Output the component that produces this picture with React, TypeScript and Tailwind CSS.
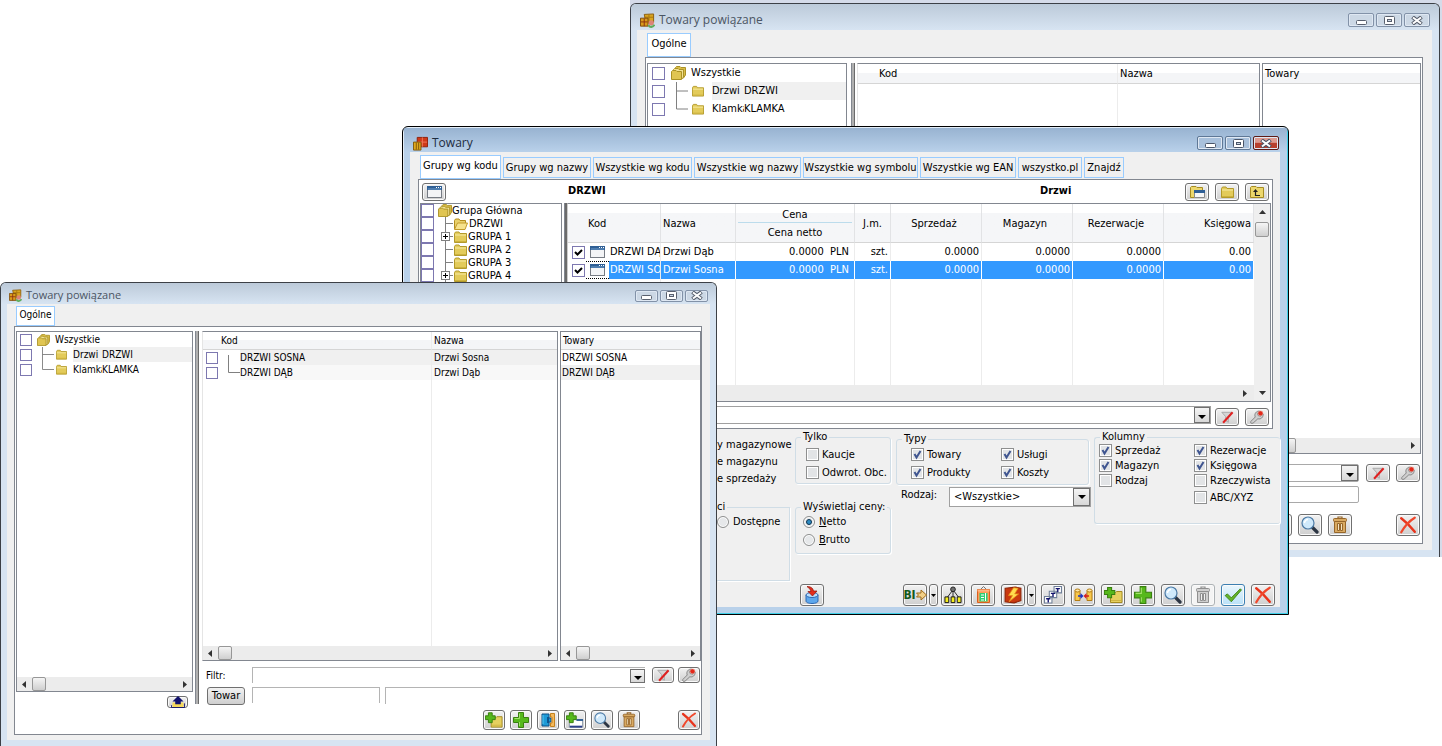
import { useState } from 'react';
import type { ReactNode } from 'react';
import clsx from 'clsx';

// ---------- icons ----------

function FolderIcon({ className = 'w-[13px] h-3' }: { className?: string }) {
  return (
    <svg viewBox="0 0 13 12" className={clsx('shrink-0', className)} aria-hidden="true">
      <path d="M.5 2.5 1.5 1H5l1 1.5h6.5v9H.5z" fill="#e3cb5a" stroke="#b39a2a" />
      <path d="M1 4h11" stroke="#f7eba6" />
      <path d="M1 10.5h11" stroke="#cdb23d" />
    </svg>
  );
}

function OpenFolderIcon() {
  return (
    <svg viewBox="0 0 14 12" className="h-3 w-[14px] shrink-0" aria-hidden="true">
      <path d="M.5 11V2.5L1.5 1H5l1 1.5h5.5V5" fill="#e9d06a" stroke="#b38d1e" />
      <path d="M.5 11.5 3.5 5h10l-2.5 6.5z" fill="#f6e28c" stroke="#c29a2c" />
    </svg>
  );
}

function FoldersIcon({ className }: { className: string }) {
  return (
    <svg viewBox="0 0 15 14" className={clsx('shrink-0', className)} aria-hidden="true">
      <path d="M4.500 3V1.500L5.500.500H9l1 1h4.500v7.500l-2 3H5z" fill="#d9bd48" stroke="#ab9226" />
      <path d="M2.500 5V3.500l1-1H7l1 1h4.500v7.500l-1 1.500H3z" fill="#f2e294" stroke="#ab9226" />
      <path d="M.5 13.500v-8l1-1H5l1 1h4.500v8z" fill="#e0c552" stroke="#ab9226" />
    </svg>
  );
}

function WindowIcon({ className = 'w-[15px] h-3' }: { className?: string }) {
  return (
    <svg viewBox="0 0 15 12" className={clsx('shrink-0', className)} aria-hidden="true">
      <rect x=".5" y=".5" width="14" height="11" fill="#f3f4f6" stroke="#777c84" />
      <path d="M0 0h15v4H0z" fill="#2f5f95" />
      <path d="M1 3h13" stroke="#6f9cc9" />
      <path d="M9 1.500h1m1 0h1m1 0h1" stroke="#fff" />
    </svg>
  );
}

const PLUS = 'M5.500 1.500h5v4h4v5h-4v4h-5v-4h-4v-5h4z';

function PlusIcon() {
  return (
    <svg viewBox="0 0 16 16" className="size-full" aria-hidden="true">
      <path d="M5.500.5h5v5h5v5h-5v5h-5v-5h-5v-5h5z" fill="#56b81c" stroke="#39800f" />
      <path d="M6.500 1.500v5h-5M6.500 10v4" fill="none" stroke="#a3e36a" />
    </svg>
  );
}

function PlusFolderIcon() {
  return (
    <svg viewBox="0 0 19 16" className="h-full w-[19px]" aria-hidden="true">
      <path d="M6.500 5.500h5l1-1h5.500v11H6.500z" fill="#e6d05f" stroke="#a68c22" />
      <path d="M7 13.500h10" stroke="#cfb443" />
      <path d={PLUS} transform="scale(.8) translate(-1 -1)" fill="#56b81c" stroke="#39800f" strokeWidth="1.300" />
    </svg>
  );
}

function PlusListIcon() {
  return (
    <svg viewBox="0 0 19 16" className="h-full w-[19px]" aria-hidden="true">
      <path d="M3.500 7.500h14v8h-14z" fill="#fff" stroke="#8b97a6" />
      <path d="M11 7h7v2h-7z" fill="#2f5f95" />
      <path d="M4 15h13" stroke="#2b3f8b" strokeWidth="2" />
      <path d={PLUS} transform="scale(.8) translate(-1 -1)" fill="#56b81c" stroke="#39800f" strokeWidth="1.300" />
    </svg>
  );
}

function PuzzleIcon() {
  return (
    <svg viewBox="0 0 16 16" className="size-full" aria-hidden="true">
      <path d="M2 2h7v4h2v4H9v4H2z" fill="#1e9bd7" stroke="#0c4e85" />
      <path d="M10.500 1.500h4v13h-4V11H12V5h-1.500z" fill="#f5b95b" stroke="#c4821f" />
      <path d="M7 5h2v6H7z" fill="#0b5590" />
      <path d="M3 3v9" stroke="#5cc6ee" />
    </svg>
  );
}

function SearchIcon() {
  return (
    <svg viewBox="0 0 18 18" className="size-full" aria-hidden="true">
      <path d="m11.500 11.500 4.500 4.500" stroke="#2d3644" strokeWidth="3.200" strokeLinecap="round" />
      <circle cx="7" cy="7" r="6" fill="#cfe9fb" stroke="#4c7aa5" strokeWidth="1.200" />
      <path d="M3.500 7A3.500 3.500 0 0 1 7 3.500" fill="none" stroke="#fff" strokeWidth="1.500" />
    </svg>
  );
}

function TrashIcon({ gray }: { gray?: boolean }) {
  const dark = gray ? '#8f8f8f' : '#96662a';
  const fill = gray ? '#cfcfcf' : '#d9aa62';
  return (
    <svg viewBox="0 0 16 18" className="size-full" aria-hidden="true">
      <path d="M6 2.500V1h4v1.500" fill="none" stroke={dark} strokeWidth="1.200" />
      <rect x="1.500" y="2.500" width="13" height="3" rx="1" fill={fill} stroke={dark} />
      <path d="M2.500 5.500h11v11h-11z" fill={fill} stroke={dark} />
      <path d="M5.500 7.500h2v7h-2zM8.500 7.500h2v7h-2z" fill={gray ? '#f0f0f0' : '#f4e3c0'} stroke={dark} />
    </svg>
  );
}

function CrossIcon() {
  return (
    <svg viewBox="0 0 16 16" className="size-full" aria-hidden="true">
      <path d="M2 2c4 3 8 7 12 12" stroke="#e8341c" strokeWidth="2.200" fill="none" strokeLinecap="round" />
      <path d="M14 1.500C9 4.500 5 9 2 14.500" stroke="#f0482c" strokeWidth="2" fill="none" strokeLinecap="round" />
    </svg>
  );
}

function CheckIcon() {
  return (
    <svg viewBox="0 0 16 16" className="size-full" aria-hidden="true">
      <path d="m1 8.500 2-1.500 3.500 3.500L14.500 2.500l1 1L6.500 14z" fill="#63b52b" stroke="#3c8013" strokeWidth=".8" />
    </svg>
  );
}

function FilterOffIcon() {
  return (
    <svg viewBox="0 0 18 15" className="h-[13px] w-4" aria-hidden="true">
      <path d="M3 1.500h11l-3.500 5V13L7.500 11V6.500z" fill="#d5d5d5" stroke="#a4a4a4" />
      <path d="M15.500 1.500 4.500 13.500" stroke="#df2020" strokeWidth="2.400" />
    </svg>
  );
}

function WrenchIcon() {
  return (
    <svg viewBox="0 0 18 16" className="h-[14px] w-4" aria-hidden="true">
      <path
        d="m2 13 5-5C5.500 4.500 8 1 12 1.200L9.500 4l1 2.500 3 .5 2.500-2.500c.5 4-3 6.500-6 5.500l-5.500 5C2.500 16 1 14.500 2 13z"
        fill="#cfcfcf"
        stroke="#7b7b7b"
      />
      <circle cx="13" cy="3.800" r="2.800" fill="#e2281a" stroke="#f09a8c" strokeWidth=".6" />
    </svg>
  );
}

function UpFolderIcon() {
  return (
    <svg viewBox="0 0 16 13" className="h-3 w-4" aria-hidden="true">
      <path d="M2 7h12v5H2z" fill="#f6d95b" />
      <path d="M1 10v2.500h14V8" fill="none" stroke="#12126d" />
      <path d="M8 0 14 6h-3v3H5V6H2z" fill="#12126d" />
    </svg>
  );
}

function FolderWindowIcon() {
  return (
    <svg viewBox="0 0 16 14" className="h-[14px] w-4" aria-hidden="true">
      <path d="M1.500 12.500v-10l1-1H7l1 1h5.500v10z" fill="#ecd76c" stroke="#a68c22" />
      <path d="M5.500 6.500h10v6h-10z" fill="#f7f7f7" stroke="#8a8a8a" />
      <path d="M5 5h11v3H5z" fill="#2f5f95" />
    </svg>
  );
}

function FolderUpIcon() {
  return (
    <svg viewBox="0 0 16 14" className="h-[14px] w-4" aria-hidden="true">
      <path d="M1.500 12.500v-10l1-1H7l1 1h6.500v10z" fill="#ecd76c" stroke="#a68c22" />
      <path d="M6.500 6v4.500H11" fill="none" stroke="#222" strokeWidth="1.200" />
      <path d="m6.500 4 2.500 3H4z" fill="#222" />
    </svg>
  );
}

function ImportIcon() {
  return (
    <svg viewBox="0 0 16 18" className="size-full" aria-hidden="true">
      <path d="M2 9v6c0 1.500 2.500 2.500 6 2.500s6-1 6-2.500V9" fill="#5da7ec" stroke="#2c68b4" />
      <ellipse cx="8" cy="9" rx="6" ry="2.500" fill="#b9dcfa" stroke="#2c68b4" />
      <path d="M3 .5c4 0 6 1.500 6.500 4.500H13l-4.500 5L4 5.500h3C6.500 3.500 5 2 3 .5z" fill="#e32c1c" stroke="#8e1109" strokeWidth=".7" />
    </svg>
  );
}

function ArrowRightIcon() {
  return (
    <svg viewBox="0 0 11 12" className="h-3 w-[11px] shrink-0" aria-hidden="true">
      <path d="M.5 4H5V1l5.500 5L5 11V8H.5L2.500 6z" fill="#f2cf86" stroke="#a06c1b" />
    </svg>
  );
}

function TreeIcon() {
  return (
    <svg viewBox="0 0 20 19" className="h-full w-5" aria-hidden="true">
      <path d="M10 4 4 12M10 4v8M10 4l6 8" stroke="#222" />
      <circle cx="10" cy="3.500" r="2.500" fill="#707070" stroke="#222" />
      <path d="M1.500 11.500h4v6h-4zM8 11.500h4v6H8zM14.500 11.500h4v6h-4z" fill="#f4ee1e" stroke="#111" />
    </svg>
  );
}

function ClipboardIcon() {
  return (
    <svg viewBox="0 0 15 18" className="h-full w-[15px]" aria-hidden="true">
      <path d="M5 3 7.500.5 10 3" fill="none" stroke="#777" />
      <path d="M1.500 3.500h12v13h-12z" fill="#ff9a58" stroke="#d9601e" />
      <path d="M1.500 3.500h12v2h-12z" fill="#ffb482" />
      <path d="M3.500 7h8v8.500h-8z" fill="#2fcf74" />
      <path d="M5 9h3m-3 2.500h3M5 14h3M9.500 7v8" stroke="#fff" />
    </svg>
  );
}

function BoltIcon() {
  return (
    <svg viewBox="0 0 16 16" className="size-full" aria-hidden="true">
      <path d="m1 2 9-1 5 1v11l-6 2-8-1z" fill="#c9390f" stroke="#8f2508" />
      <path d="M8.500 1.500 4 8.500h3.500l-3 5.500L13 7H9.500l3-5z" fill="#ffdc4e" stroke="#e88b1a" strokeWidth=".7" />
    </svg>
  );
}

function StepsIcon() {
  return (
    <svg viewBox="0 0 17 17" className="size-full" aria-hidden="true">
      <g fill="#fff" stroke="#6f7f98">
        <path d="M9.500.500h7v6h-7zM5 5h7v6H5zM.5 10h7v6h-7z" />
      </g>
      <path d="M11 2.500h4M13 2.500V6M6.500 7h4m-2 0v3.500M2 12h4m-2 0v3.500" stroke="#12126d" strokeWidth="1.300" />
    </svg>
  );
}

function LinkIcon() {
  return (
    <svg viewBox="0 0 19 14" className="h-full w-[19px]" aria-hidden="true">
      <path d="M1 2.500h5v10H1zM13 2.500h5v10h-5z" fill="#f8c94c" stroke="#b47d12" />
      <ellipse cx="3.500" cy="2.500" rx="2.500" ry="1.500" fill="#ffe9a8" stroke="#b47d12" />
      <ellipse cx="15.500" cy="2.500" rx="2.500" ry="1.500" fill="#ffe9a8" stroke="#b47d12" />
      <path d="M4 8h4" stroke="#1b35c4" strokeWidth="1.500" />
      <path d="m6.500 5 3 3-3 3z" fill="#1b35c4" />
      <path d="M11 8h4" stroke="#d81e1e" strokeWidth="1.500" />
      <path d="m12.500 5-3 3 3 3z" fill="#d81e1e" />
    </svg>
  );
}

function AppIcon({ className, related }: { className: string; related?: boolean }) {
  return (
    <svg viewBox="0 0 16 16" className={clsx('shrink-0', className)} aria-hidden="true">
      {related ? (
        <>
          <path d="M4.500 1.500 14.500 1v9l-8 1z" fill="#d9a520" stroke="#8a5c0c" />
          <path d="M5 4.500h9M9.500 1.500v8" stroke="#a8780f" />
          <path d="M.500 5.500h8V14h-8z" fill="#d99c1c" stroke="#7d4a0b" />
          <path d="M1 9.500h7M4.500 6v8" stroke="#8c2f10" />
          <circle cx="12" cy="10.500" r="2.800" fill="#dc8478" />
          <path d="M9 13c1.500 2.500 4.500 2.500 6.500-.5" fill="none" stroke="#5dac5b" strokeWidth="2.200" />
        </>
      ) : (
        <>
          <path d="M4.500 1.500h11v10h-11z" fill="#cf3a19" stroke="#8f1e08" />
          <path d="M10 1.500v10M5 6.500h10" stroke="#f0795a" />
          <path d="M.5 6.500h8v8.500h-8z" fill="#dfa91e" stroke="#80560b" />
          <path d="M3.500 7v7.500m2.500-7.500v7.500" stroke="#80560b" />
        </>
      )}
    </svg>
  );
}

function Arrow({ dir }: { dir: 'left' | 'right' | 'up' | 'down' }) {
  const d = { left: 'M5 0v7L1 3.500z', right: 'M2 0v7l4-3.500z', up: 'M0 5h7L3.500 1z', down: 'M0 2h7L3.500 6z' }[dir];
  return (
    <svg viewBox="0 0 7 7" className="size-[7px] shrink-0" aria-hidden="true">
      <path d={d} fill="#333" />
    </svg>
  );
}

// ---------- controls ----------

interface ToolButtonProps {
  label: string;
  className?: string;
  tone?: 'normal' | 'off' | 'hot';
  children: ReactNode;
}

function ToolButton({ label, className, tone = 'normal', children }: ToolButtonProps) {
  return (
    <button
      type="button"
      aria-label={label}
      title={label}
      className={clsx(
        'flex shrink-0 items-center justify-center rounded-[3px] border shadow-[inset_0_0_0_1px_#fafafa]',
        tone === 'normal' && 'border-[#707070] bg-linear-to-b from-[#f2f2f2] to-[#cfcfcf]',
        tone === 'off' && 'border-[#adb2b5] bg-[#f4f4f4]',
        tone === 'hot' && 'border-[#3c7fb1] bg-linear-to-b from-[#eaf6fd] to-[#b9e1f8]',
        className,
      )}
    >
      {children}
    </button>
  );
}

interface BoxProps {
  label: string;
  checked?: boolean;
  className?: string;
}

// Flat tick box used inside lists
function ListCheck({ label, checked, className }: BoxProps) {
  return (
    <span className={clsx('relative block shrink-0', className)}>
      <input
        type="checkbox"
        aria-label={label}
        defaultChecked={checked}
        className="peer block size-full appearance-none border border-[#7d78b0] bg-white"
      />
      <svg viewBox="0 0 13 13" className="pointer-events-none absolute inset-0 hidden size-full peer-checked:block" aria-hidden="true">
        <path d="m3 6 2.500 2.500L10 4" fill="none" stroke="#000" strokeWidth="2" />
      </svg>
    </span>
  );
}

function LabeledCheck({ label, checked }: BoxProps) {
  return (
    <label className="flex items-center gap-[3px] whitespace-nowrap leading-[15px]">
      <span className="relative block size-[13px] shrink-0">
        <input
          type="checkbox"
          defaultChecked={checked}
          className="peer block size-full appearance-none border border-[#8e8f8f] bg-[#e2e4e6] shadow-[inset_0_0_0_1px_#fff]"
        />
        <svg viewBox="0 0 13 13" className="pointer-events-none absolute inset-0 hidden size-full peer-checked:block" aria-hidden="true">
          <path d="m3.500 6 2 3.500L9.500 3" fill="none" stroke="#3f5590" strokeWidth="2" />
        </svg>
      </span>
      {label}
    </label>
  );
}

function LabeledRadio({ name, checked, children }: { name: string; checked?: boolean; children: ReactNode }) {
  return (
    <label className="flex items-center gap-1 whitespace-nowrap leading-[18px]">
      <span className="relative block size-3 shrink-0">
        <input
          type="radio"
          name={name}
          defaultChecked={checked}
          className="peer block size-full appearance-none rounded-full border border-[#8e8f8f] bg-[#e6e8ea] shadow-[inset_0_0_0_1px_#fff]"
        />
        <span className="pointer-events-none absolute inset-[3px] hidden rounded-full border border-[#0d3350] bg-[#2e8cc4] peer-checked:block" />
      </span>
      <span>{children}</span>
    </label>
  );
}

function HScroll({ className, thumb = 'ml-2' }: { className?: string; thumb?: string }) {
  return (
    <div className={clsx('flex shrink-0 items-center bg-[#ececec] px-1', className)}>
      <Arrow dir="left" />
      <span
        className={clsx('h-full w-[14px] rounded-[2px] border border-[#979797] bg-linear-to-b from-[#f5f5f5] to-[#cfcfcf]', thumb)}
      />
      <span className="flex-1" />
      <Arrow dir="right" />
    </div>
  );
}

function DropButton({ label, className }: { label: string; className?: string }) {
  return (
    <button
      type="button"
      aria-label={label}
      className={clsx('flex shrink-0 items-center justify-center border border-[#707070] bg-linear-to-b from-[#f4f4f4] to-[#d8d8d8]', className)}
    >
      <svg viewBox="0 0 8 4" className="mt-1 h-1 w-2" aria-hidden="true">
        <path d="M0 0h8L4 4z" fill="#000" />
      </svg>
    </button>
  );
}

// ---------- window chrome ----------

function CaptionButtons({ active, className }: { active?: boolean; className: string }) {
  const base = 'flex items-center justify-center rounded-[2px] border shadow-[inset_0_0_0_1px_#dfe8f3]';
  const plain = active ? 'border-[#5f7896] bg-[#a9c1dc]' : 'border-[#8292a8] bg-[#ccd8e5]';
  const mark = active ? '#4a5568' : '#59606e';
  return (
    <div className="ml-auto flex gap-[2px]">
      <button type="button" aria-label="Minimalizuj" className={clsx(base, plain, className)}>
        <svg viewBox="0 0 11 5" className="mt-1 h-[5px] w-[11px]" aria-hidden="true">
          <rect x=".5" y=".5" width="10" height="4" rx="1" fill="#fff" stroke={mark} />
        </svg>
      </button>
      <button type="button" aria-label="Maksymalizuj" className={clsx(base, plain, className)}>
        <svg viewBox="0 0 11 9" className="h-[9px] w-[11px]" aria-hidden="true">
          <rect x=".5" y=".5" width="10" height="8" rx="1" fill="#fff" stroke={mark} />
          <rect x="3.500" y="3.500" width="4" height="2" fill="#ccd8e5" stroke={mark} />
        </svg>
      </button>
      <button
        type="button"
        aria-label="Zamknij"
        className={clsx(base, active ? 'border-[#5e1b16] bg-linear-to-b from-[#dd9a90] from-45% to-[#b8402e] to-50%' : plain, className)}
      >
        <svg viewBox="0 0 12 9" className="h-[9px] w-3" aria-hidden="true">
          <path d="M1.500 1 10.500 8M10.500 1 1.500 8" stroke={mark} strokeWidth="4" />
          <path d="M2 1.500 10 7.500M10 1.500 2 7.500" stroke="#fff" strokeWidth="2" />
        </svg>
      </button>
    </div>
  );
}

// ---------- related goods window ----------

const LARGE = {
  frame: 'left-[630px] top-[3px] w-[810px] h-[554px] text-[11px]',
  title: 'h-[26px] pl-[9px] pr-[9px] pt-[6px]',
  icon: 'size-[15px]',
  titleText: 'text-[12px]',
  caption: 'h-[14px] w-[26px]',
  body: 'ml-[6px] mr-[7px] mb-[7px] pt-[3px] pl-2 pr-[9px] pb-[6px]',
  tab: 'h-6 w-11 pb-[2px]',
  panel: 'pt-[5px] pr-px',
  tree: 'w-[200px] mr-1',
  treeBox: 'mb-[89px] pl-1',
  rootIcon: 'ml-[6px] h-[14px] w-[15px]',
  rootText: 'ml-[5px] pt-px',
  branch: 'ml-[11px]',
  leafIcon: 'ml-1 w-3 h-3',
  leafText: 'ml-[8px] pt-px',
  leafName: 'w-8',
  splitter: 'mr-[2px]',
  tables: 'h-[391px]',
  head: 'h-5',
  headCell: 'pt-[2px]',
  row: 'h-[18px]',
  codeCol: 'w-[260px] pl-[21px]',
  side: 'w-[159px]',
  check: 'size-[13px]',
  scroll: 'h-[15px]',
  thumb: 'ml-2',
  line: 'mt-[10px] h-[18px]',
  drop: 'w-[17px] h-4',
  field: 'border-[#a9a9a9] rounded-[2px] border',
  fields: 'pr-[62px]',
  tool: 'w-6 h-[18px]',
  toolGap: 'ml-[6px]',
  action: 'w-6 h-[22px] p-px',
  actions: 'mt-[10px] gap-[6px]',
  lastGap: 'ml-[38px]',
};

type Sizes = typeof LARGE;

const SMALL: Sizes = {
  frame: 'left-0 top-[282px] w-[717px] h-[464px] text-[10px]',
  title: 'h-[21px] pl-2 pr-2 pt-1',
  icon: 'size-[13px]',
  titleText: 'text-[11px]',
  caption: 'h-3 w-[23px]',
  body: 'mx-[6px] mb-[6px] pt-[2px] pl-[7px] pr-2 pb-[5px]',
  tab: 'h-5 w-[39px] pb-[3px]',
  panel: 'pt-1',
  tree: 'w-[177px] mr-[2px]',
  treeBox: 'pl-[3px]',
  rootIcon: 'ml-[5px] h-3 w-[13px]',
  rootText: 'ml-[5px]',
  branch: 'ml-[10px]',
  leafIcon: 'ml-[2px] w-[11px] h-[11px]',
  leafText: 'ml-[6px]',
  leafName: 'w-[29px]',
  splitter: 'mr-[3px] mb-[30px]',
  tables: 'h-[330px]',
  head: 'h-[18px]',
  headCell: '',
  row: 'h-[15px]',
  codeCol: 'w-[229px] pl-[18px]',
  side: 'w-[141px]',
  check: 'size-3',
  scroll: 'h-[14px]',
  thumb: 'ml-1',
  line: 'mt-[6px] h-4',
  drop: 'w-[15px] h-[14px]',
  field: 'border-[#b4b4b4] border-t border-l',
  fields: 'pr-[56px]',
  tool: 'w-[22px] h-4',
  toolGap: 'ml-1',
  action: 'w-[22px] h-5 p-px',
  actions: 'mt-[5px] gap-[5px]',
  lastGap: 'ml-[33px]',
};

const GROUPS = [
  { name: 'Drzwi', code: 'DRZWI' },
  { name: 'Klamka', code: 'KLAMKA' },
];

interface Item {
  code: string;
  name: string;
}

const HEAD = 'border-b border-[#d5d5d5] bg-linear-to-b from-white from-45% to-[#f4f5f7] to-50% text-left font-normal';

function RelatedWindow({ id, sizes: s, items }: { id: string; sizes: Sizes; items: Item[] }) {
  return (
    <section
      className={clsx(
        'absolute flex flex-col overflow-hidden rounded-t-[6px] border border-b-0 border-[#3c4046] bg-[#d7e4f2] text-black',
        s.frame,
      )}
    >
      <header className={clsx('flex shrink-0 items-center bg-linear-to-b from-[#bccad9] to-[#d7e4f2]', s.title)}>
        <AppIcon related className={s.icon} />
        <h2 className={clsx("ml-1 font-['Open_Sans',sans-serif] text-[#4b5563]", s.titleText)}>Towary powiązane</h2>
        <CaptionButtons className={s.caption} />
      </header>

      <div className={clsx('flex min-h-0 flex-1 flex-col bg-[#f0f0f0]', s.body)}>
        <div className="flex shrink-0 pl-[2px]">
          <button type="button" className={clsx('flex items-center justify-center border border-[#99ccff] bg-white', s.tab)}>
            Ogólne
          </button>
        </div>

        <div className={clsx('flex min-h-0 flex-1 border border-[#828790] bg-white pl-px', s.panel)}>
          <div className={clsx('flex shrink-0 flex-col', s.tree)}>
            <div className={clsx('flex min-h-0 flex-1 flex-col border border-[#828790]', s.treeBox)}>
              <div className={clsx('flex items-center', s.row)}>
                <ListCheck label="Wszystkie" className={s.check} />
                <FoldersIcon className={s.rootIcon} />
                <span className={s.rootText}>Wszystkie</span>
              </div>
              {GROUPS.map((g, i) => (
                <div key={g.code} className={clsx('flex items-stretch', s.row)}>
                  <ListCheck label={g.code} className={clsx('self-center', s.check)} />
                  <svg
                    viewBox="0 0 12 18"
                    preserveAspectRatio="none"
                    className={clsx('h-full w-3 shrink-0', s.branch)}
                    aria-hidden="true"
                  >
                    <path d={i === GROUPS.length - 1 ? 'M.5 0v9H12' : 'M.5 0v18M0 9h12'} fill="none" stroke="#808080" />
                  </svg>
                  <FolderIcon className={clsx('self-center', s.leafIcon)} />
                  <div className={clsx('flex flex-1 items-center', i === 0 && 'bg-[#f0f0f0]', s.leafText)}>
                    <span className={clsx('shrink-0 overflow-hidden whitespace-nowrap', s.leafName)}>{g.name}</span>
                    <span>{g.code}</span>
                  </div>
                </div>
              ))}
              <span className="flex-1" />
              <HScroll className={clsx('-ml-[3px]', s.scroll)} thumb={s.thumb} />
            </div>
            {items.length > 0 && (
              <div className="flex h-[42px] shrink-0 justify-end pr-[5px] pt-1">
                <ToolButton label="Do góry" className="h-3 w-[21px]">
                  <UpFolderIcon />
                </ToolButton>
              </div>
            )}
          </div>

          <div className={clsx('w-1 shrink-0 border-x border-[#828790] border-r-[#6b6b6b] bg-[#b0b0b0]', s.splitter)} />

          <div className="flex min-w-0 flex-1 flex-col">
            <div className={clsx('flex shrink-0 gap-[2px]', s.tables)}>
              <div className="flex min-w-0 flex-1 flex-col border border-[#828790] border-l-[#e5e5e5]">
                <div className="min-h-0 flex-1">
                  <table className="h-full w-full table-fixed border-separate border-spacing-0">
                    <thead>
                      <tr className={s.head}>
                        <th className={clsx(HEAD, 'border-r border-r-[#ececec]', s.codeCol, s.headCell)}>Kod</th>
                        <th className={clsx(HEAD, 'pl-[2px]', s.headCell)}>Nazwa</th>
                      </tr>
                    </thead>
                    <tbody>
                      {items.map((item, i) => (
                        <tr key={item.code} className={s.row}>
                          <td className="border-r border-[#ececec] p-0">
                            <div className={clsx('flex items-stretch', s.row)}>
                              <ListCheck label={item.code} className="ml-[3px] size-3 self-center" />
                              <svg viewBox="0 0 12 15" className="ml-[10px] h-full w-3" aria-hidden="true">
                                <path d={i === items.length - 1 ? 'M.5 0v7.500H12' : 'M.5 5v10'} fill="none" stroke="#808080" />
                              </svg>
                              <span className={clsx('flex flex-1 items-center', i === 0 ? 'bg-[#f0f0f0]' : 'bg-[#f8f8f8]')}>
                                {item.code}
                              </span>
                            </div>
                          </td>
                          <td className={clsx('py-0 pl-[2px]', i === 0 ? 'bg-[#f0f0f0]' : 'bg-[#f8f8f8]')}>{item.name}</td>
                        </tr>
                      ))}
                      <tr>
                        <td className="border-r border-[#ececec]" />
                        <td />
                      </tr>
                    </tbody>
                  </table>
                </div>
                <HScroll className={s.scroll} thumb={s.thumb} />
              </div>
              <div className={clsx('flex shrink-0 flex-col border border-[#828790]', s.side)}>
                <table className="w-full border-separate border-spacing-0">
                  <thead>
                    <tr className={s.head}>
                      <th className={clsx(HEAD, 'pl-[2px]', s.headCell)}>Towary</th>
                    </tr>
                  </thead>
                  <tbody>
                    {items.map((item, i) => (
                      <tr key={item.code} className={s.row}>
                        <td className={clsx('py-0 pl-px', i === 1 && 'bg-[#f0f0f0]')}>{item.code}</td>
                      </tr>
                    ))}
                  </tbody>
                </table>
                <span className="flex-1" />
                <HScroll className={s.scroll} thumb={s.thumb} />
              </div>
            </div>

            <div className={clsx('flex shrink-0 items-center pl-1 pr-px', s.line)}>
              <label htmlFor={`${id}-filter`} className="w-[46px] shrink-0">
                Filtr:
              </label>
              <div className={clsx('flex h-full min-w-0 flex-1 items-center', s.field)}>
                <input id={`${id}-filter`} type="text" className="h-full min-w-0 flex-1 px-1 outline-none" />
                <DropButton label="Historia filtrów" className={s.drop} />
              </div>
              <ToolButton label="Wyczyść filtr" className={clsx('ml-[7px]', s.tool)}>
                <FilterOffIcon />
              </ToolButton>
              <ToolButton label="Konstruktor filtra" className={clsx(s.toolGap, s.tool)}>
                <WrenchIcon />
              </ToolButton>
            </div>

            <div className={clsx('mt-1 flex shrink-0 items-start pl-[5px]', s.fields)}>
              <button
                type="button"
                className="mr-[7px] h-[18px] w-[38px] rounded-[3px] border border-[#707070] bg-linear-to-b from-[#f2f2f2] to-[#cfcfcf] text-[11px] leading-4"
              >
                Towar
              </button>
              <input type="text" aria-label="Kod towaru" className={clsx('mr-[5px] h-4 w-[128px] border-r', s.field)} />
              <input type="text" aria-label="Nazwa towaru" className={clsx('h-[17px] min-w-0 flex-1', s.field)} />
            </div>

            <div className={clsx('flex shrink-0 justify-end pr-px', s.actions)}>
              <ToolButton label="Dodaj grupę" className={s.action}>
                <PlusFolderIcon />
              </ToolButton>
              <ToolButton label="Dodaj" className={s.action}>
                <PlusIcon />
              </ToolButton>
              <ToolButton label="Powiąż" className={s.action}>
                <PuzzleIcon />
              </ToolButton>
              <ToolButton label="Dodaj z listy" className={s.action}>
                <PlusListIcon />
              </ToolButton>
              <ToolButton label="Podgląd" className={s.action}>
                <SearchIcon />
              </ToolButton>
              <ToolButton label="Usuń" className={s.action}>
                <TrashIcon />
              </ToolButton>
              <ToolButton label="Zamknij" className={clsx(s.lastGap, s.action)}>
                <CrossIcon />
              </ToolButton>
            </div>
          </div>
        </div>
      </div>
    </section>
  );
}

// ---------- goods window ----------

const TABS = [
  { label: 'Grupy wg kodu', width: 'w-[81px]' },
  { label: 'Grupy wg nazwy', width: 'w-[88px]' },
  { label: 'Wszystkie wg kodu', width: 'w-[99px]' },
  { label: 'Wszystkie wg nazwy', width: 'w-[107px]' },
  { label: 'Wszystkie wg symbolu', width: 'w-[115px]' },
  { label: 'Wszystkie wg EAN', width: 'w-[96px]' },
  { label: 'wszystko.pl', width: 'w-16' },
  { label: 'Znajdź', width: 'w-10' },
];

const TREE = [
  { label: 'DRZWI', open: true, expandable: false },
  { label: 'GRUPA 1', open: false, expandable: true },
  { label: 'GRUPA 2', open: false, expandable: false },
  { label: 'GRUPA 3', open: false, expandable: false },
  { label: 'GRUPA 4', open: false, expandable: true },
];

const GOODS = [
  { code: 'DRZWI DĄB', name: 'Drzwi Dąb' },
  { code: 'DRZWI SOSNA', name: 'Drzwi Sosna' },
];

const TH =
  'border-r border-b border-[#e2e3e5] border-b-[#d5d5d5] bg-linear-to-b from-white from-25% to-[#f5f6f8] to-25% font-normal px-0 pb-0 pt-[3px]';

function GoodsTable() {
  const [selected, setSelected] = useState('DRZWI SOSNA');

  return (
    <table className="h-full w-full table-fixed border-separate border-spacing-0">
      <colgroup>
        <col className="w-[93px]" />
        <col className="w-[75px]" />
        <col className="w-[119px]" />
        <col className="w-9" />
        <col className="w-[91px]" />
        <col className="w-[91px]" />
        <col className="w-[91px]" />
        <col />
      </colgroup>
      <thead>
        <tr className="h-[38px]">
          <th className={TH}>
            <span className="block pl-5 text-left">Kod</span>
          </th>
          <th className={TH}>
            <span className="block pl-[2px] text-left">Nazwa</span>
          </th>
          <th className={TH}>
            <div className="mx-[2px] border-b border-[#bcdcec] leading-[15px]">Cena</div>
            <div className="leading-[19px]">Cena netto</div>
          </th>
          <th className={TH}>J.m.</th>
          <th className={clsx(TH, 'pr-1')}>Sprzedaż</th>
          <th className={clsx(TH, 'pr-1')}>Magazyn</th>
          <th className={clsx(TH, 'pr-1')}>Rezerwacje</th>
          <th className={TH}>
            <span className="block pr-[2px] text-right">Księgowa</span>
          </th>
        </tr>
      </thead>
      <tbody>
        {GOODS.map(g => {
          const on = g.code === selected;
          const td = clsx(
            'overflow-hidden whitespace-nowrap border-r pb-0 pl-0 pr-[2px] pt-px',
            on ? 'border-r-white bg-[#3399ff] text-white' : 'border-r-[#ececec]',
          );
          return (
            <tr key={g.code} className="h-[18px]" onClick={() => setSelected(g.code)}>
              <td className={clsx('overflow-hidden border-r border-[#ececec] p-0', on && 'text-white')}>
                <div className="flex h-[18px] items-stretch whitespace-nowrap">
                  <ListCheck label={g.code} checked className="ml-1 size-[13px] self-center" />
                  <span
                    className={clsx('ml-px flex shrink-0 items-center border-y border-dotted px-1', on ? 'border-black' : 'border-transparent')}
                  >
                    <WindowIcon className="h-3 w-[15px]" />
                  </span>
                  <span className={clsx('flex min-w-0 flex-1 items-center overflow-hidden pl-px pt-px', on && 'bg-[#3399ff]')}>
                    {g.code}
                  </span>
                </div>
              </td>
              <td className={clsx(td, 'text-left')}>
                <span className="pl-[2px]">{g.name}</span>
              </td>
              <td className={clsx(td, 'whitespace-pre text-right')}>{'0.0000  PLN '}</td>
              <td className={clsx(td, 'text-right')}>szt.</td>
              <td className={clsx(td, 'text-right')}>0.0000</td>
              <td className={clsx(td, 'text-right')}>0.0000</td>
              <td className={clsx(td, 'text-right')}>0.0000</td>
              <td className={clsx(td, 'text-right')}>0.00</td>
            </tr>
          );
        })}
        <tr>
          {[0, 1, 2, 3, 4, 5, 6].map(i => (
            <td key={i} className="border-r border-[#ececec]" />
          ))}
          <td />
        </tr>
      </tbody>
    </table>
  );
}

function Group({ title, className, body, children }: { title: string; className?: string; body: string; children: ReactNode }) {
  return (
    <fieldset className={clsx('min-w-0 rounded-[3px] border border-[#d0dde6] shadow-[1px_1px_0_#fff]', className)}>
      <legend className="ml-[5px] whitespace-nowrap px-[2px] leading-3">{title}</legend>
      <div className={body}>{children}</div>
    </fieldset>
  );
}

const ACTION = 'w-6 h-[22px] p-px';

function SplitArrow({ label }: { label: string }) {
  return (
    <ToolButton label={label} className="ml-[2px] mr-[3px] h-[22px] w-[9px]">
      <svg viewBox="0 0 5 3" className="h-[3px] w-[5px]" aria-hidden="true">
        <path d="M0 0h5L2.500 3z" fill="#000" />
      </svg>
    </ToolButton>
  );
}

function GoodsWindow() {
  const [tab, setTab] = useState(0);

  return (
    <section className="absolute left-[402px] top-[126px] flex h-[489px] w-[887px] flex-col overflow-hidden rounded-t-[6px] border border-black bg-[#b9d1ea] text-[11px] text-black shadow-[inset_-1px_-1px_0_#3fd0e8,inset_1px_1px_0_#e4eef8]">
      <header className="mx-px mt-px flex h-6 shrink-0 items-center bg-linear-to-b from-[#98b3d1] to-[#b9d1ea] pl-[9px] pr-2 pt-[6px]">
        <AppIcon className="size-[15px]" />
        <h1 className="ml-1 font-['Open_Sans',sans-serif] text-[12px] text-[#1d2b3e]">Towary</h1>
        <CaptionButtons active className="h-[14px] w-[26px]" />
      </header>

      <div className="mb-[7px] ml-[7px] mr-2 flex min-h-0 flex-1 flex-col bg-[#f0f0f0]">
        <nav className="flex h-[27px] shrink-0 items-end gap-[2px] pl-[10px]">
          {TABS.map((t, i) => (
            <button
              key={t.label}
              type="button"
              onClick={() => setTab(i)}
              className={clsx(
                'shrink-0 whitespace-nowrap border border-[#99ccff] text-center',
                t.width,
                i === tab ? 'h-6 bg-white pb-[2px]' : 'mb-px h-[21px] bg-[#f0f0f0] pt-px',
              )}
            >
              {t.label}
            </button>
          ))}
        </nav>

        <div className="ml-2 mr-[7px] flex h-[250px] shrink-0 flex-col border border-[#828790] bg-white px-px">
          <div className="flex h-[23px] shrink-0 items-center pl-[2px] pr-[2px]">
            <ToolButton label="Widok" className="h-[18px] w-6">
              <WindowIcon />
            </ToolButton>
            <b className="ml-[122px] w-[472px] pb-px">DRZWI</b>
            <b className="flex-1 pb-px">Drzwi</b>
            <div className="flex gap-[6px]">
              <ToolButton label="Grupa z oknem" className="h-[18px] w-6">
                <FolderWindowIcon />
              </ToolButton>
              <ToolButton label="Grupa" className="h-[18px] w-6">
                <FolderIcon />
              </ToolButton>
              <ToolButton label="Grupa nadrzędna" className="h-[18px] w-6">
                <FolderUpIcon />
              </ToolButton>
            </div>
          </div>

          <div className="flex h-[199px] shrink-0">
            <div className="w-[142px] shrink-0 border border-[#828790]">
              <div className="flex h-[13px] items-center">
                <ListCheck label="Grupa Główna" className="mr-[4px] size-[13px]" />
                <FoldersIcon className="h-[13px] w-[14px]" />
                <span className="pt-[2px]">Grupa Główna</span>
              </div>
              {TREE.map(node => (
                <div key={node.label} className="flex h-[13px] items-center">
                  <ListCheck label={node.label} className="size-[13px]" />
                  <svg viewBox="0 0 20 13" className="h-[13px] w-5 shrink-0" aria-hidden="true">
                    <path d="M11.500 0v13M11.500 6.500H19" stroke="#808080" />
                    {node.expandable && (
                      <>
                        <rect x="7.500" y="2.500" width="8" height="8" fill="#fff" stroke="#808080" />
                        <path d="M9 6.500h5M11.500 4v5" stroke="#000" />
                      </>
                    )}
                  </svg>
                  {node.open ? <OpenFolderIcon /> : <FolderIcon />}
                  <span className="ml-px pt-[2px]">{node.label}</span>
                </div>
              ))}
            </div>
            <div className="ml-[2px] w-[3px] shrink-0 border-l border-[#828790] bg-[#6b6b6b]" />
            <div className="flex min-w-0 flex-1 border border-[#828790] border-l-[#ccc]">
              <div className="flex min-w-0 flex-1 flex-col">
                <div className="min-h-0 flex-1">
                  <GoodsTable />
                </div>
                <HScroll className="h-4 pr-[6px]" />
              </div>
              <div className="flex w-4 shrink-0 flex-col items-center bg-[#efefef] py-[5px]">
                <Arrow dir="up" />
                <span className="mt-[6px] h-[15px] w-[14px] rounded-[2px] border border-[#979797] bg-linear-to-b from-[#f5f5f5] to-[#cfcfcf]" />
                <span className="flex-1" />
                <Arrow dir="down" />
              </div>
            </div>
          </div>

          <div className="mt-1 flex h-[19px] shrink-0 items-start pr-[2px]">
            <div className="flex h-[18px] flex-1 items-center border border-[#a0a0a0]">
              <input type="text" aria-label="Filtr towarów" className="h-full min-w-0 flex-1 px-1 outline-none" />
              <DropButton label="Historia filtrów" className="h-4 w-4" />
            </div>
            <ToolButton label="Wyczyść filtr" className="ml-1 mt-[2px] h-[18px] w-6">
              <FilterOffIcon />
            </ToolButton>
            <ToolButton label="Konstruktor filtra" className="ml-[6px] mt-[2px] h-[18px] w-6">
              <WrenchIcon />
            </ToolButton>
          </div>
        </div>

        <div className="flex shrink-0 items-start pl-[307px] pt-[2px]">
          <div className="mr-[5px] w-[73px] shrink-0">
            <div className="h-[70px] whitespace-nowrap pt-[5px] leading-[17px]">
              <p>y magazynowe</p>
              <p>e magazynu</p>
              <p>e sprzedaży</p>
            </div>
            <fieldset className="h-[80px] border border-l-0 border-[#d0dde6] shadow-[1px_1px_0_#fff]">
              <legend className="pr-[2px] leading-3">ci</legend>
              <LabeledRadio name="quantity">Dostępne</LabeledRadio>
            </fieldset>
          </div>

          <div className="mr-[5px] w-[96px] shrink-0">
            <Group title="Tylko" className="h-[53px]" body="flex flex-col items-start gap-[3px] pl-[10px] pt-1">
              <LabeledCheck label="Kaucje" />
              <LabeledCheck label="Odwrot. Obc." />
            </Group>
            <Group title="Wyświetlaj ceny:" className="mt-[17px] h-[53px]" body="flex flex-col items-start pl-[7px]">
              <LabeledRadio name="price" checked>
                <u>N</u>etto
              </LabeledRadio>
              <LabeledRadio name="price">
                <u>B</u>rutto
              </LabeledRadio>
            </Group>
          </div>

          <div className="w-[195px] shrink-0 pt-[2px]">
            <Group title="Typy" className="mr-[2px] h-[52px]" body="grid grid-cols-[90px_1fr] gap-y-[3px] pl-[14px] pt-[2px]">
              <LabeledCheck label="Towary" checked />
              <LabeledCheck label="Usługi" checked />
              <LabeledCheck label="Produkty" checked />
              <LabeledCheck label="Koszty" checked />
            </Group>
            <div className="mt-[2px] flex items-start pl-[5px]">
              <label htmlFor="kind" className="w-12 shrink-0">
                Rodzaj:
              </label>
              <div className="relative h-5 flex-1">
                <select id="kind" className="size-full appearance-none border border-[#a0a0a0] bg-white pl-1 leading-[18px] outline-none">
                  <option>&lt;Wszystkie&gt;</option>
                </select>
                <span className="pointer-events-none absolute inset-y-px right-px flex w-[17px] items-center justify-center border border-[#707070] bg-linear-to-b from-[#f4f4f4] to-[#d8d8d8]">
                  <svg viewBox="0 0 8 4" className="h-1 w-2" aria-hidden="true">
                    <path d="M0 0h8L4 4z" fill="#000" />
                  </svg>
                </span>
              </div>
            </div>
          </div>

          <Group title="Kolumny" className="ml-[3px] h-[93px] flex-1 border-r-0" body="grid grid-cols-[95px_1fr] pl-1">
            <LabeledCheck label="Sprzedaż" checked />
            <LabeledCheck label="Rezerwacje" checked />
            <LabeledCheck label="Magazyn" checked />
            <LabeledCheck label="Księgowa" checked />
            <LabeledCheck label="Rodzaj" />
            <LabeledCheck label="Rzeczywista" />
            <div className="col-start-2 pt-[2px]">
              <LabeledCheck label="ABC/XYZ" />
            </div>
          </Group>
        </div>

        <div className="mt-auto flex items-center pb-px pl-[390px] pr-[5px]">
          <ToolButton label="Import" className={ACTION}>
            <ImportIcon />
          </ToolButton>
          <span className="flex-1" />
          <ToolButton label="Analizy BI" className="h-[22px] w-6">
            <b className="text-[12px] text-[#14591b]">BI</b>
            <ArrowRightIcon />
          </ToolButton>
          <SplitArrow label="Więcej analiz" />
          <div className="flex gap-[6px]">
            <ToolButton label="Struktura" className={ACTION}>
              <TreeIcon />
            </ToolButton>
            <ToolButton label="Schowek" className={ACTION}>
              <ClipboardIcon />
            </ToolButton>
            <ToolButton label="Operacje seryjne" className={ACTION}>
              <BoltIcon />
            </ToolButton>
          </div>
          <SplitArrow label="Więcej operacji" />
          <div className="ml-[2px] flex gap-[6px]">
            <ToolButton label="Atrybuty" className={ACTION}>
              <StepsIcon />
            </ToolButton>
            <ToolButton label="Połącz" className={ACTION}>
              <LinkIcon />
            </ToolButton>
            <ToolButton label="Dodaj grupę" className={ACTION}>
              <PlusFolderIcon />
            </ToolButton>
            <ToolButton label="Dodaj" className={ACTION}>
              <PlusIcon />
            </ToolButton>
            <ToolButton label="Podgląd" className={ACTION}>
              <SearchIcon />
            </ToolButton>
            <ToolButton label="Usuń" tone="off" className={ACTION}>
              <TrashIcon gray />
            </ToolButton>
            <ToolButton label="Wybierz" tone="hot" className={ACTION}>
              <CheckIcon />
            </ToolButton>
            <ToolButton label="Zamknij" className={ACTION}>
              <CrossIcon />
            </ToolButton>
          </div>
        </div>
      </div>
    </section>
  );
}

export default function App() {
  return (
    <main className="relative min-h-screen overflow-hidden bg-white font-['DejaVu_Sans_Condensed','DejaVu_Sans',sans-serif]">
      <div className="absolute left-[630px] right-0 top-0 h-[557px] bg-[#d5dbe9]" />
      <RelatedWindow id="related-empty" sizes={LARGE} items={[]} />
      <GoodsWindow />
      <RelatedWindow id="related" sizes={SMALL} items={[GOODS[1], GOODS[0]]} />
    </main>
  );
}
